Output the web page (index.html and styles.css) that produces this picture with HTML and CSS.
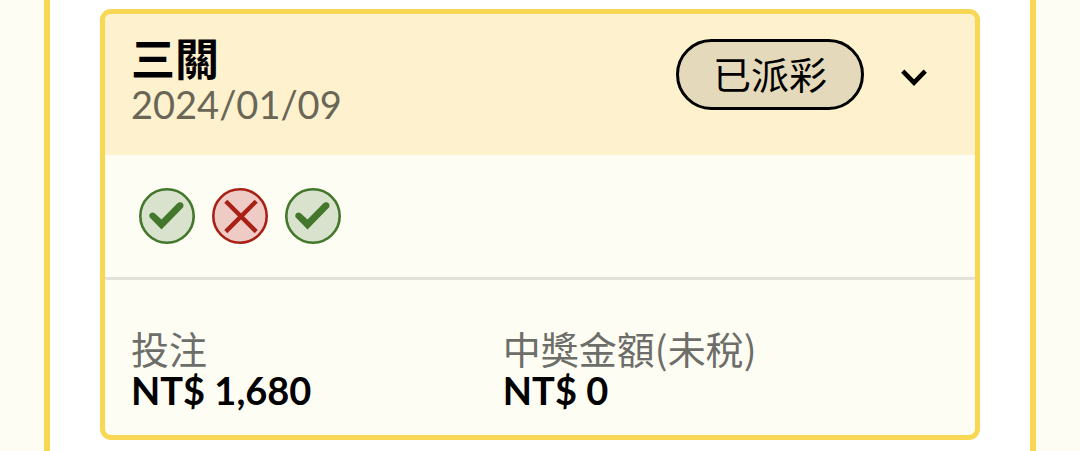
FILE: index.html
```html
<!DOCTYPE html>
<html lang="zh-Hant">
<head>
<meta charset="utf-8">
<meta name="viewport" content="width=device-width, initial-scale=1">
<title>三關</title>
<link rel="stylesheet" href="styles.css">
</head>
<body>
<main class="panel">
  <article class="ticket">
    <header class="ticket-header">
      <div class="ticket-heading">
        <h2 class="ticket-title">三關</h2>
        <time class="ticket-date" datetime="2024-01-09">2024/01/09</time>
      </div>
      <span class="status">已派彩</span>
      <button class="toggle" type="button" aria-label="展開">
        <svg width="28" height="20" viewBox="0 0 28 20" fill="none" stroke="currentColor" stroke-width="4.6"><path d="M2.8 3.2 14 14.6 25.2 3.2"/></svg>
      </button>
    </header>
    <ul class="legs">
      <li class="leg leg-win">
        <svg viewBox="0 0 56 56" role="img" aria-label="中"><circle cx="28" cy="28" r="26.7"/><path class="tick" d="M10.8 29.5C9 27 12.2 22.8 15.7 25.2L22.5 31.4 38.2 15.4C41 12.9 45.7 14.5 44.2 19.2L22.5 41.4Z"/></svg>
      </li>
      <li class="leg leg-lose">
        <svg viewBox="0 0 56 56" role="img" aria-label="未中"><circle cx="28" cy="28" r="26.7"/><path class="cross" d="M13.8 13.2 44.2 43.6M44.2 13.2 13.8 43.6"/></svg>
      </li>
      <li class="leg leg-win">
        <svg viewBox="0 0 56 56" role="img" aria-label="中"><circle cx="28" cy="28" r="26.7"/><path class="tick" d="M10.8 29.5C9 27 12.2 22.8 15.7 25.2L22.5 31.4 38.2 15.4C41 12.9 45.7 14.5 44.2 19.2L22.5 41.4Z"/></svg>
      </li>
    </ul>
    <dl class="amounts">
      <div class="amount">
        <dt>投注</dt>
        <dd>NT$ 1,680</dd>
      </div>
      <div class="amount">
        <dt>中獎金額(未稅)</dt>
        <dd>NT$ 0</dd>
      </div>
    </dl>
  </article>
</main>
</body>
</html>
```
FILE: styles.css
```css
* {
  box-sizing: border-box;
}

body {
  margin: 0;
  padding: 0 44px;
  background: #fefdf3;
  color: #000;
  font-family: Lato, "Noto Sans CJK TC", sans-serif;
  font-size: 38px;
}

.panel {
  min-height: 100vh;
  padding: 9px 50px 10px;
  border: solid #f7d753;
  border-width: 0 6px;
  background: #fff;
}

.ticket {
  overflow: hidden;
  border: 5px solid #f7d753;
  border-radius: 11px;
  background: #fefdf3;
}

.ticket-header {
  display: flex;
  align-items: flex-start;
  padding: 23px 47px 28px 26px;
  background: #fdf2cd;
}

.ticket-heading {
  flex: 1;
}

.ticket-title {
  margin: 0;
  font-size: 44px;
  font-weight: 700;
  line-height: 45px;
}

.ticket-date {
  display: block;
  color: #6a6657;
  line-height: 45px;
}

.status {
  margin-top: 2px;
  padding: 0 34px;
  border: 3px solid #000;
  border-radius: 36px;
  background: #e4dabb;
  line-height: 65px;
}

.toggle {
  display: flex;
  margin: 31px 0 0 36px;
  padding: 0;
  border: 0;
  background: none;
  color: #000;
}

.legs {
  display: flex;
  gap: 17px;
  margin: 0;
  padding: 33px 34px;
  border-bottom: 3px solid #e3e2da;
  list-style: none;
}

.leg {
  width: 56px;
  height: 56px;
}

.leg svg {
  display: block;
}

.leg circle {
  stroke: currentColor;
  stroke-width: 2.6;
}

.leg-win {
  color: #43772b;
  fill: #d9e2cd;
}

.leg-lose {
  color: #a92116;
  fill: #eeccc5;
}

.tick {
  fill: currentColor;
}

.cross {
  fill: none;
  stroke: currentColor;
  stroke-width: 4.4;
}

.amounts {
  display: grid;
  grid-template-columns: 5fr 6fr;
  margin: 0;
  padding: 49px 26px 22px;
}

.amount dt {
  color: #6d6d69;
  font-family: "Noto Sans CJK TC", sans-serif;
  line-height: 38px;
}

.amount dd {
  margin: 0;
  font-weight: 700;
  line-height: 46px;
}
```
